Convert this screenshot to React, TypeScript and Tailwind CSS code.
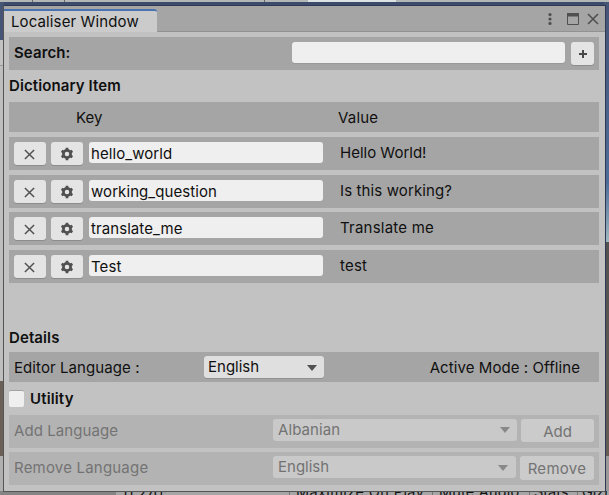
import React from "react";

const CloseIcon = ({ className }: { className: string }) => (
  <svg viewBox="0 0 12 12" className={className} fill="none" stroke="#505050" strokeWidth="1.6">
    <path d="M1 1 11 11M11 1 1 11" />
  </svg>
);

const GearIcon = () => (
  <svg viewBox="0 0 14 14" className="mt-px h-[14px] w-[14px]" fill="none" stroke="#505050">
    <circle cx="7" cy="7" r="3.6" strokeWidth="2.7" />
    <path
      d="M7 .8v2.2M7 11v2.2M1.6 3.9l1.9 1.1M10.5 9l1.9 1.1M1.6 10.1l1.9-1.1M10.5 5l1.9-1.1"
      strokeWidth="2.7"
    />
  </svg>
);

const Caret = ({ className }: { className: string }) => (
  <svg viewBox="0 0 10 6" className={`h-[6px] w-[10px] ${className}`}>
    <path d="M0 0h10L5 6z" fill="currentColor" />
  </svg>
);

const items = [
  { key: "hello_world", value: "Hello World!", gap: "mt-[5px]", spacing: "tracking-normal" },
  { key: "working_question", value: "Is this working?", gap: "mt-[5px]", spacing: "tracking-[0.12px]" },
  { key: "translate_me", value: "Translate me", gap: "mt-[4px]", spacing: "tracking-[0.22px]" },
  { key: "Test", value: "test", gap: "mt-[5px]", spacing: "tracking-[0.2px]" },
];

const button =
  "flex shrink-0 items-center justify-center rounded-[3px] bg-[#e4e4e4] shadow-[0_1px_0_#8c8c8c]";

function Desktop() {
  return (
    <div className="flex h-[495px] w-[609px] flex-col bg-[#3c4a6c]">
      <div className="flex h-[2px] bg-[#b3b7b6]">
        <div className="ml-[32px] w-px bg-[#666]" />
        <div className="ml-[31px] w-px bg-[#666]" />
        <div className="ml-[167px] w-px bg-[#b3b7b6]" />
        <div className="ml-[31px] w-px bg-[#666]" />
        <div className="ml-[43px] w-[88px] bg-[#dce3e2]" />
      </div>
      <div className="flex h-[489px] justify-between">
        <div className="w-[4px]">
          <div className="h-[38px] bg-[#465476]" />
          <div className="h-[25px] bg-[#c2c2c2]" />
          <div className="h-px bg-[#999]" />
          <div className="h-[315px] bg-[#bebebe]" />
          <div className="h-[75px] bg-[#6a6058]" />
          <div className="h-[35px] bg-[#b0b0b0]" />
        </div>
        <div className="w-[5px]">
          <div className="h-[240px] bg-linear-to-b from-[#465476] via-[#4d6d99] via-75% to-[#9fb7bd]" />
          <div className="h-[214px] bg-linear-to-b from-[#515151] to-[#665e55]" />
          <div className="h-[35px] bg-[#999]" />
        </div>
      </div>
      <div className="flex h-[4px] overflow-hidden whitespace-nowrap bg-[#a6a6a6] text-[14.5px] leading-[18px] text-[#111]">
        <div className="w-[116px] shrink-0 bg-[#858585]" />
        <div className="mt-[-6px] w-[173px] shrink-0 pl-[8px]">0.270:</div>
        <div className="mt-[-8px] w-[143px] shrink-0 border-l border-[#777] pl-[6px] tracking-[0.4px]">Maximize On Play</div>
        <div className="mt-[-8px] w-[97px] shrink-0 border-l border-[#777] pl-[6px] tracking-[0.2px]">Mute Audio</div>
        <div className="mt-[-8px] w-[48px] shrink-0 border-l border-[#777] pl-[4px]">Stats</div>
        <div className="mt-[-8px] shrink-0 border-l border-[#777] pl-[4px]">Gizmos</div>
      </div>
    </div>
  );
}

export default function App() {
  return (
    <div className="relative h-[495px] w-[609px] overflow-hidden font-['Inter',sans-serif] text-[15px] leading-[18px] text-[#101010]">
      <Desktop />
      <div className="absolute top-[5px] left-[3px] flex h-[487px] w-[603px] flex-col border border-[#555] border-t-[#303954] border-r-[#303954] bg-[#c2c2c2]">
        <header className="flex h-[26px] shrink-0 border-b border-[#929292] bg-[#a5a5a5]">
          <div className="mt-[3px] h-[23px] w-[153px] rounded-tr-[3px] border-t-2 border-[#4972b0] bg-[#cbcbcb] pt-[2px] pl-[7px] tracking-[0.12px] whitespace-nowrap">
            Localiser Window
          </div>
          <div className="ml-auto flex items-center pr-[6px]">
            <svg viewBox="0 0 4 12" className="mr-[15px] h-[12px] w-[4px]" fill="#505050">
              <circle cx="2" cy="1.6" r="1.6" />
              <circle cx="2" cy="6" r="1.6" />
              <circle cx="2" cy="10.4" r="1.6" />
            </svg>
            <svg viewBox="0 0 12 12" className="mr-[8px] h-[12px] w-[12px]">
              <path d="M.5.5h11v11H.5z" fill="none" stroke="#505050" />
              <path d="M0 0h12v3.5H0z" fill="#505050" />
            </svg>
            <CloseIcon className="h-[12px] w-[12px]" />
          </div>
        </header>

        <main className="flex flex-col pt-[5px] pr-[6px] pl-[5px]">
          <div className="flex h-[33px] bg-[#a5a5a5] pr-[5px] pl-[5px]">
            <span className="mt-[7px] font-semibold tracking-[0.1px]">Search:</span>
            <div className="mt-[5px] ml-auto h-[21px] w-[273px] rounded-[3px] bg-[#efefef] shadow-[0_1px_0_#999]" />
            <div className={`${button} mt-[5px] ml-[6px] h-[23px] w-[23px]`}>
              <svg viewBox="0 0 8 8" className="mt-px h-[8px] w-[8px]">
                <path d="M4 0v8M0 4h8" stroke="#484848" strokeWidth="2" />
              </svg>
            </div>
          </div>

          <h2 className="mt-[7px] h-[25px] font-semibold tracking-[0.1px]">Dictionary Item</h2>

          <div className="flex h-[30px] bg-[#a5a5a5] pt-[7px] pl-[67px]">
            <span className="w-[262px]">Key</span>
            <span className="tracking-[0.2px]">Value</span>
          </div>

          {items.map((item) => (
            <div key={item.key} className={`flex h-[33px] bg-[#a5a5a5] pt-[5px] pl-[5px] ${item.gap}`}>
              <div className={`${button} h-[23px] w-[32px] pr-px`}>
                <CloseIcon className="mt-[2px] h-[11px] w-[11px]" />
              </div>
              <div className={`${button} ml-[5px] h-[23px] w-[32px]`}>
                <GearIcon />
              </div>
              <div className="ml-[6px] h-[21px] w-[234px] rounded-[3px] bg-[#efefef] pt-[3px] pl-[2px]">
                <span className="tracking-[0.08px]">{item.key}</span>
              </div>
              <span className={`ml-[17px] pt-[2px] ${item.spacing}`}>{item.value}</span>
            </div>
          ))}

          <h2 className="mt-[46px] h-[23px] font-semibold tracking-[0.1px]">Details</h2>

          <div className="flex h-[30px] bg-[#a5a5a5] pl-[5px]">
            <span className="mt-[7px] w-[190px] tracking-[0.08px]">Editor Language :</span>
            <div className="mt-[4px] flex h-[22px] w-[120px] items-center rounded-[3px] bg-[#dfdfdf] pr-[7px] pl-[4px] shadow-[0_1px_0_#939393]">
              <span>English</span>
              <Caret className="mt-[2px] ml-auto text-[#505050]" />
            </div>
            <span className="mt-[7px] mr-[19px] ml-auto tracking-[0.08px]">Active Mode : Offline</span>
          </div>

          <div className="flex h-[33px] pt-[8px]">
            <div className="h-[17px] w-[15px] rounded-[2px] border-t border-[#a2a2a2] bg-[#efefef]" />
            <span className="ml-[6px] font-semibold tracking-[0.15px]">Utility</span>
          </div>

          <div className="flex h-[33px] bg-[#b3b3b3] pr-[5px] pl-[5px] text-[#737373]">
            <span className="mt-[7px] w-[259px] tracking-[0.08px]">Add Language</span>
            <div className="mt-[4px] flex h-[22px] w-[244px] items-center rounded-[3px] bg-[#c9c9c9] pr-[7px] pl-[5px]">
              <span className="tracking-[0.08px]">Albanian</span>
              <Caret className="ml-auto text-[#898989]" />
            </div>
            <div className="mt-[4px] ml-auto flex h-[23px] w-[73px] items-center justify-center rounded-[3px] bg-[#cbcbcb] pt-[2px]">
              Add
            </div>
          </div>
          <div className="mt-[4px] flex h-[33px] bg-[#b3b3b3] pr-[5px] pl-[5px] text-[#737373]">
            <span className="mt-[7px] w-[259px] tracking-[0.2px]">Remove Language</span>
            <div className="mt-[4px] flex h-[22px] w-[243px] items-center rounded-[3px] bg-[#c9c9c9] pr-[8px] pl-[5px]">
              <span>English</span>
              <Caret className="mt-px ml-auto text-[#898989]" />
            </div>
            <div className="mt-[4px] ml-auto flex h-[24px] w-[74px] items-center justify-center rounded-[3px] bg-[#cbcbcb] pt-[2px] tracking-[0.3px]">
              Remove
            </div>
          </div>
        </main>
      </div>
    </div>
  );
}
